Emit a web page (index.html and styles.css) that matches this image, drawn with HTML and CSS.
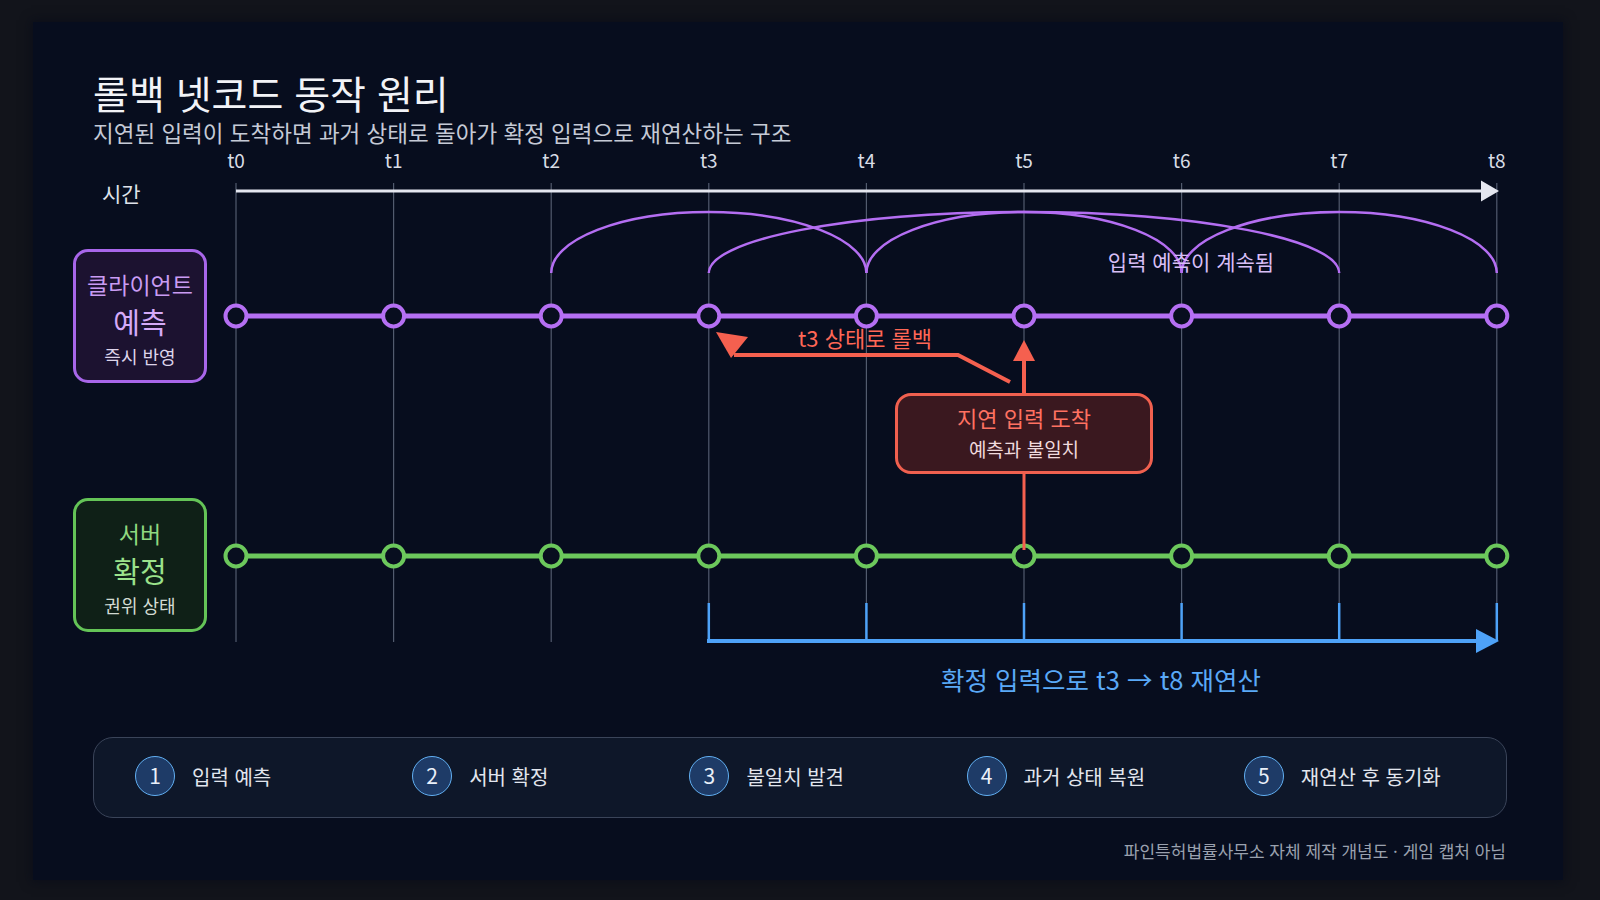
FILE: index.html
```html
<!DOCTYPE html>
<html lang="ko">
<head>
<meta charset="utf-8">
<title>롤백 넷코드 동작 원리</title>
<link rel="stylesheet" href="styles.css">
</head>
<body>
<main class="panel">
  <header class="head">
    <h1 class="title">롤백 넷코드 동작 원리</h1>
    <p class="subtitle">지연된 입력이 도착하면 과거 상태로 돌아가 확정 입력으로 재연산하는 구조</p>
  </header>

  <section class="diagram">
    <svg class="diagram-svg" width="1530" height="570" viewBox="33 145 1530 570" xmlns="http://www.w3.org/2000/svg">
      <!-- grid -->
      <g class="grid">
        <line x1="236" y1="183" x2="236" y2="642"/>
        <line x1="393.6" y1="183" x2="393.6" y2="642"/>
        <line x1="551.2" y1="183" x2="551.2" y2="642"/>
        <line x1="708.8" y1="183" x2="708.8" y2="603"/>
        <line x1="866.4" y1="183" x2="866.4" y2="603"/>
        <line x1="1024" y1="183" x2="1024" y2="603"/>
        <line x1="1181.6" y1="183" x2="1181.6" y2="603"/>
        <line x1="1339.2" y1="183" x2="1339.2" y2="603"/>
        <line x1="1496.8" y1="183" x2="1496.8" y2="603"/>
      </g>
      <!-- tick labels -->
      <g class="tick">
        <text x="236" y="168">t0</text>
        <text x="393.6" y="168">t1</text>
        <text x="551.2" y="168">t2</text>
        <text x="708.8" y="168">t3</text>
        <text x="866.4" y="168">t4</text>
        <text x="1024" y="168">t5</text>
        <text x="1181.6" y="168">t6</text>
        <text x="1339.2" y="168">t7</text>
        <text x="1496.8" y="168">t8</text>
      </g>
      <text class="axis-label" x="102" y="201.5">시간</text>
      <!-- time axis -->
      <line class="axis" x1="236" y1="191" x2="1484" y2="191"/>
      <polygon class="axis-head" points="1481,180.5 1499,191 1481,201.5"/>

      <!-- prediction arcs -->
      <g class="arcs">
        <path d="M551.2 273 A157.6 61 0 0 1 866.4 273"/>
        <path d="M708.8 273 A315.2 61 0 0 1 1339.2 273"/>
        <path d="M866.4 273 A157.6 61 0 0 1 1181.6 273"/>
        <path d="M1181.6 273 A157.6 61 0 0 1 1496.8 273"/>
      </g>
      <text class="arc-label" x="1191" y="270">입력 예측이 계속됨</text>

      <!-- client lane -->
      <line class="lane-line client" x1="236" y1="316" x2="1496.8" y2="316"/>
      <g class="node client">
        <circle cx="236" cy="316" r="10.5"/>
        <circle cx="393.6" cy="316" r="10.5"/>
        <circle cx="551.2" cy="316" r="10.5"/>
        <circle cx="708.8" cy="316" r="10.5"/>
        <circle cx="866.4" cy="316" r="10.5"/>
        <circle cx="1024" cy="316" r="10.5"/>
        <circle cx="1181.6" cy="316" r="10.5"/>
        <circle cx="1339.2" cy="316" r="10.5"/>
        <circle cx="1496.8" cy="316" r="10.5"/>
      </g>

      <!-- server lane -->
      <line class="lane-line server" x1="236" y1="556" x2="1496.8" y2="556"/>
      <g class="node server">
        <circle cx="236" cy="556" r="10.5"/>
        <circle cx="393.6" cy="556" r="10.5"/>
        <circle cx="551.2" cy="556" r="10.5"/>
        <circle cx="708.8" cy="556" r="10.5"/>
        <circle cx="866.4" cy="556" r="10.5"/>
        <circle cx="1024" cy="556" r="10.5"/>
        <circle cx="1181.6" cy="556" r="10.5"/>
        <circle cx="1339.2" cy="556" r="10.5"/>
        <circle cx="1496.8" cy="556" r="10.5"/>
      </g>

      <!-- re-simulation -->
      <g class="resim">
        <line x1="708.8" y1="603" x2="708.8" y2="642"/>
        <line x1="866.4" y1="603" x2="866.4" y2="641"/>
        <line x1="1024" y1="603" x2="1024" y2="641"/>
        <line x1="1181.6" y1="603" x2="1181.6" y2="641"/>
        <line x1="1339.2" y1="603" x2="1339.2" y2="641"/>
        <line x1="1496.8" y1="603" x2="1496.8" y2="641"/>
        <line class="resim-main" x1="707" y1="641" x2="1480" y2="641"/>
      </g>
      <polygon class="resim-head" points="1476,629 1499,641 1476,653"/>
      <text class="resim-label" x="1101" y="689.5">확정 입력으로 t3 → t8 재연산</text>

      <!-- rollback -->
      <polyline class="red-line" points="1010,382 958,355 734,355"/>
      <polygon class="red-head" points="716,332 748,337 731,358"/>
      <text class="rollback-label" x="865" y="346.5">t3 상태로 롤백</text>
      <line class="red-line" x1="1024" y1="393" x2="1024" y2="358"/>
      <polygon class="red-head" points="1024,340 1013,361 1035,361"/>
      <line class="red-line thin" x1="1024" y1="474" x2="1024" y2="550"/>
    </svg>

    <div class="lane-box client-box">
      <span class="lane-top">클라이언트</span>
      <span class="lane-main">예측</span>
      <span class="lane-sub">즉시 반영</span>
    </div>
    <div class="lane-box server-box">
      <span class="lane-top">서버</span>
      <span class="lane-main">확정</span>
      <span class="lane-sub">권위 상태</span>
    </div>
    <div class="late-box">
      <span class="late-title">지연 입력 도착</span>
      <span class="late-sub">예측과 불일치</span>
    </div>
  </section>

  <ol class="legend">
    <li class="step"><span class="step-num">1</span><span class="step-text">입력 예측</span></li>
    <li class="step"><span class="step-num">2</span><span class="step-text">서버 확정</span></li>
    <li class="step"><span class="step-num">3</span><span class="step-text">불일치 발견</span></li>
    <li class="step"><span class="step-num">4</span><span class="step-text">과거 상태 복원</span></li>
    <li class="step"><span class="step-num">5</span><span class="step-text">재연산 후 동기화</span></li>
  </ol>

  <p class="footer">파인특허법률사무소 자체 제작 개념도 · 게임 캡처 아님</p>
</main>
</body>
</html>
```

FILE: styles.css
```css
html, body {
  margin: 0;
  padding: 0;
}

body {
  width: 1600px;
  height: 900px;
  background: #12141b;
  font-family: "Noto Sans CJK KR", "Noto Sans", sans-serif;
  overflow: hidden;
}

.panel {
  box-sizing: border-box;
  margin: 22px 0 0 33px;
  width: 1530px;
  height: 858px;
  padding-top: 47px;
  background: #070d1e;
  box-shadow: 0 0 10px 2px rgba(6, 10, 24, 0.6);
  display: flex;
  flex-direction: column;
}

.head {
  padding-left: 60px;
}

.title {
  margin: 0;
  font-size: 39px;
  line-height: 46px;
  font-weight: 400;
  color: #f2f3f7;
}

.subtitle {
  margin: 4px 0 0;
  font-size: 22.5px;
  line-height: 26px;
  font-weight: 400;
  color: #c5cad6;
}

/* ---------- diagram ---------- */
.diagram {
  position: relative;
  width: 1530px;
  height: 570px;
  flex: none;
}

.diagram-svg {
  display: block;
}

.grid line {
  stroke: #525b6e;
  stroke-width: 1.2;
}

.tick text {
  font-family: "Noto Sans CJK KR", "Noto Sans", sans-serif;
  font-size: 19px;
  fill: #d9dde6;
  text-anchor: middle;
}

.axis-label {
  font-family: "Noto Sans CJK KR", "Noto Sans", sans-serif;
  font-size: 21px;
  fill: #dfe2ea;
}

.axis {
  stroke: #e4e6ef;
  stroke-width: 3;
}

.axis-head {
  fill: #e4e6ef;
}

.arcs path {
  fill: none;
  stroke: #b46ef2;
  stroke-width: 2.5;
}

.arc-label {
  font-family: "Noto Sans CJK KR", "Noto Sans", sans-serif;
  font-size: 21px;
  fill: #d8bff7;
  text-anchor: middle;
}

.lane-line {
  stroke-width: 5;
}

.lane-line.client {
  stroke: #b56ff3;
}

.lane-line.server {
  stroke: #6cc85c;
}

.node circle {
  fill: #080e1f;
  stroke-width: 4;
}

.node.client circle {
  stroke: #b56ff3;
}

.node.server circle {
  stroke: #6cc85c;
}

.resim line {
  stroke: #4ea2f8;
  stroke-width: 2.5;
}

.resim .resim-main {
  stroke-width: 4;
}

.resim-head {
  fill: #4ea2f8;
}

.resim-label {
  font-family: "Noto Sans CJK KR", "Noto Sans", sans-serif;
  font-size: 25.5px;
  fill: #5aa9f7;
  text-anchor: middle;
}

.red-line {
  fill: none;
  stroke: #f5604f;
  stroke-width: 4;
}

.red-line.thin {
  stroke-width: 3;
}

.red-head {
  fill: #f5604f;
}

.rollback-label {
  font-family: "Noto Sans CJK KR", "Noto Sans", sans-serif;
  font-size: 22px;
  fill: #ff6756;
  text-anchor: middle;
}

/* lane boxes (diagram nodes) */
.lane-box {
  position: absolute;
  left: 40px;
  width: 134px;
  height: 134px;
  box-sizing: border-box;
  border: 3px solid;
  border-radius: 15px;
  padding-top: 18px;
  display: flex;
  flex-direction: column;
  align-items: center;
}

.client-box {
  top: 104px;
  border-color: #a866ea;
  background: #1c1230;
}

.server-box {
  top: 353px;
  border-color: #64c457;
  background: #0f2017;
}

.lane-top {
  font-size: 23px;
  line-height: 28px;
}

.lane-main {
  font-size: 29px;
  line-height: 46px;
  font-weight: 400;
}

.lane-sub {
  font-size: 18px;
  line-height: 24px;
}

.client-box .lane-top {
  color: #c99cf3;
}

.client-box .lane-main {
  color: #d5aaf8;
}

.client-box .lane-sub {
  color: #ddd4ea;
}

.server-box .lane-top {
  color: #8fd980;
}

.server-box .lane-main {
  color: #9be28b;
}

.server-box .lane-sub {
  color: #d2dbd3;
}

.late-box {
  position: absolute;
  left: 862px;
  top: 248px;
  width: 258px;
  height: 81px;
  box-sizing: border-box;
  border: 3px solid #f0604f;
  border-radius: 16px;
  background: #3a181f;
  padding-top: 7px;
  display: flex;
  flex-direction: column;
  align-items: center;
}

.late-title {
  font-size: 22px;
  line-height: 28px;
  color: #ff7161;
}

.late-sub {
  margin-top: 4px;
  font-size: 19px;
  line-height: 28px;
  color: #efdadd;
}

/* ---------- legend ---------- */
.legend {
  list-style: none;
  box-sizing: border-box;
  margin: 22px 56px 0 60px;
  height: 81px;
  padding: 0 0 3px 41px;
  border: 1.5px solid #3a4459;
  border-radius: 20px;
  background: #0e1729;
  display: flex;
  align-items: center;
}

.step {
  width: 277.2px;
  flex: none;
  display: flex;
  align-items: center;
  gap: 17px;
}

.step-num {
  box-sizing: border-box;
  width: 40px;
  height: 40px;
  border-radius: 50%;
  border: 1.5px solid #62b0f3;
  background: #1e3b67;
  color: #eaf0f9;
  font-size: 21px;
  line-height: 37px;
  text-align: center;
}

.step-text {
  font-size: 20px;
  color: #e2e6ee;
}

.footer {
  margin: 23px 57px 0 0;
  text-align: right;
  font-size: 17px;
  line-height: 20px;
  color: #9aa1ae;
}
```
